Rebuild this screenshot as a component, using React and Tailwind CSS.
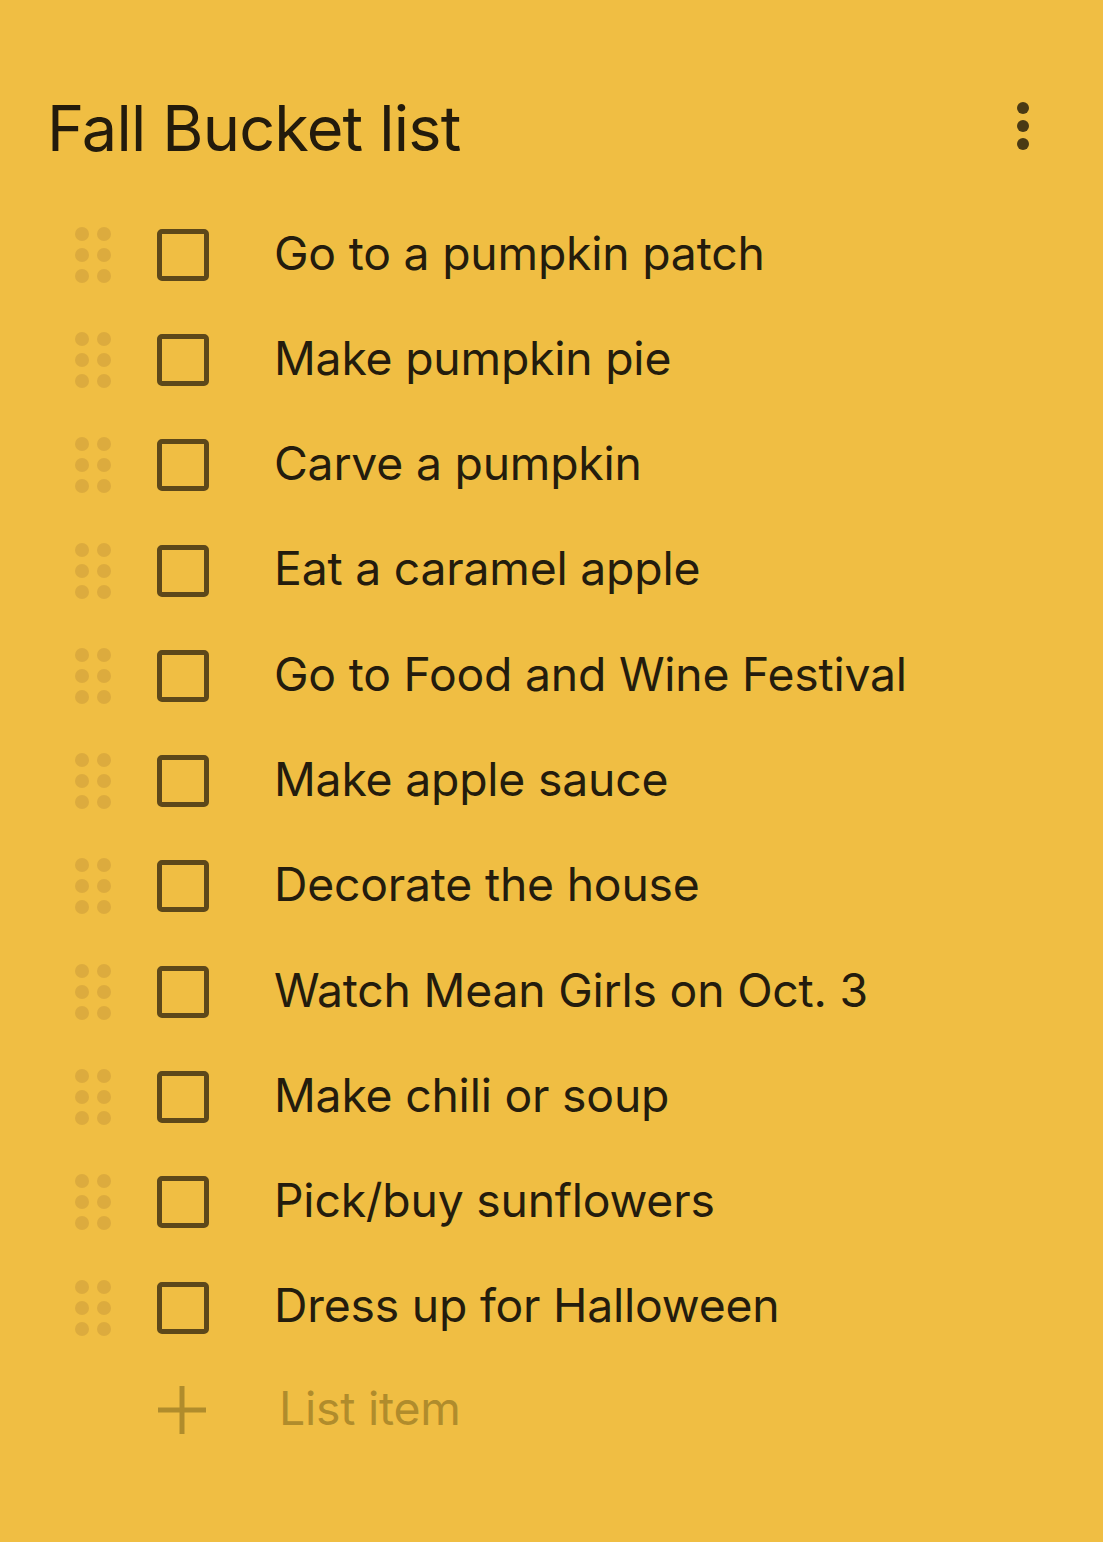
const items = [
  "Go to a pumpkin patch",
  "Make pumpkin pie",
  "Carve a pumpkin",
  "Eat a caramel apple",
  "Go to Food and Wine Festival",
  "Make apple sauce",
  "Decorate the house",
  "Watch Mean Girls on Oct. 3",
  "Make chili or soup",
  "Pick/buy sunflowers",
  "Dress up for Halloween",
];

function DragHandle() {
  return (
    <div className="grid grid-cols-2 gap-x-[8px] gap-y-[7px] w-[36px]">
      {[0, 1, 2, 3, 4, 5].map((i) => (
        <span key={i} className="w-[14px] h-[14px] rounded-full bg-[#dcab3e]" />
      ))}
    </div>
  );
}

function Row({ text }) {
  return (
    <div className="flex items-center h-[105.3px]">
      <div className="w-[82px] pl-[75px] box-content flex items-center">
        <DragHandle />
      </div>
      <div className="w-[52px] h-[52px] border-[5px] border-[#5d481a] rounded-[5px] shrink-0" />
      <span className="ml-[65px] text-[46.3px] text-[#241c0d] tracking-[-0.2px] leading-none pb-[4px]">{text}</span>
    </div>
  );
}

export default function App() {
  return (
    <div
      className="w-[1103px] h-[1542px] bg-[#f0be43] overflow-hidden"
      style={{ fontFamily: "Inter, 'Noto Sans', sans-serif" }}
    >
      <div className="flex items-start justify-between pl-[47px] pr-[74px] pt-[97px] h-[202px]">
        <h1 className="text-[63px] leading-none text-[#231b0c] tracking-[-0.8px]">Fall Bucket list</h1>
        <div className="flex flex-col gap-[6px] pt-[5px]">
          <span className="w-[12px] h-[12px] rounded-full bg-[#4a3a14]" />
          <span className="w-[12px] h-[12px] rounded-full bg-[#4a3a14]" />
          <span className="w-[12px] h-[12px] rounded-full bg-[#4a3a14]" />
        </div>
      </div>
      <div>
        {items.map((t) => (
          <Row key={t} text={t} />
        ))}
        <div className="flex items-center h-[100px]">
          <svg className="ml-[158px]" width="48" height="48" viewBox="0 0 48 48">
            <path d="M24 0v48M0 24h48" stroke="#b08c2c" strokeWidth="5" fill="none" />
          </svg>
          <span className="ml-[73px] text-[46.3px] text-[#b08c2c] tracking-[-0.2px] leading-none pb-[4px]">List item</span>
        </div>
      </div>
    </div>
  );
}
